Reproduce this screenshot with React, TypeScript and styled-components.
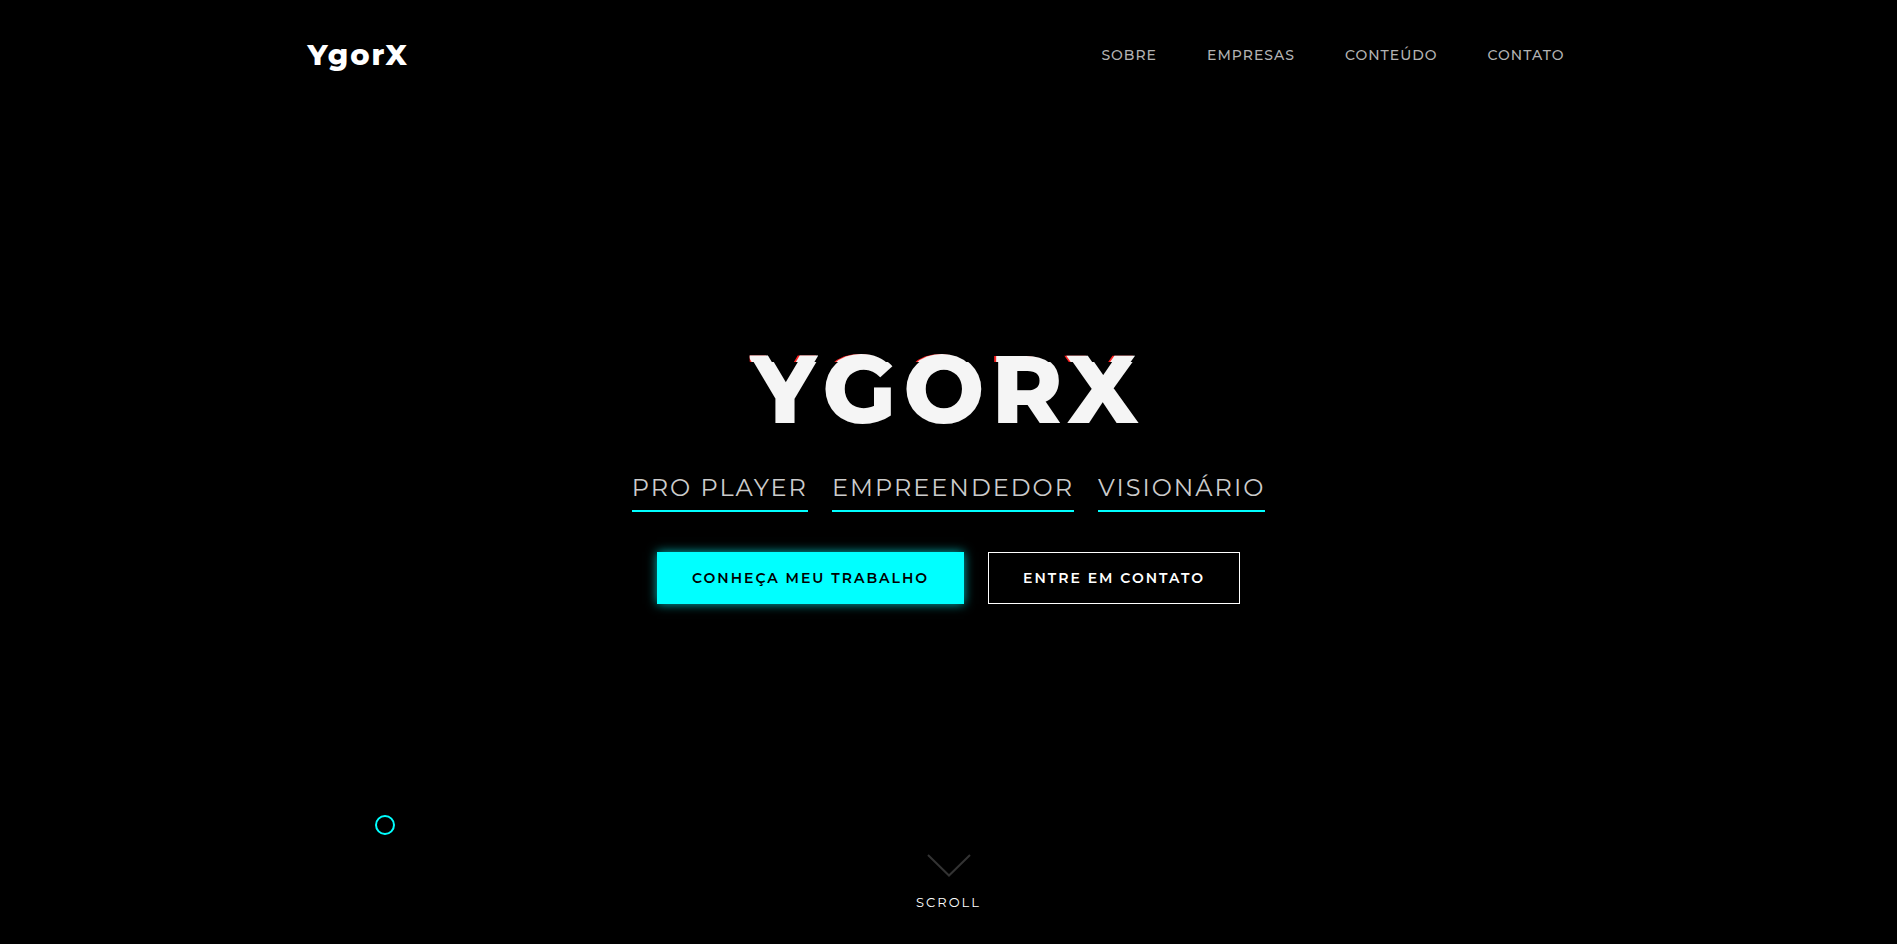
import React from "react";
import styled, { createGlobalStyle } from "styled-components";

const GlobalStyle = createGlobalStyle`
  *, *::before, *::after { box-sizing: border-box; }
  body {
    margin: 0;
    background: #000;
    color: #f5f5f5;
    font-family: Montserrat, Inter, sans-serif;
  }
`;

const Page = styled.div`
  min-height: 100vh;
  display: grid;
  grid-template-rows: 1fr auto 1fr;
`;

const Header = styled.header`
  align-self: start;
  width: 100%;
  max-width: 1282px;
  margin: 0 auto;
  padding-top: 32px;
  display: flex;
  justify-content: space-between;
  align-items: center;
`;

const Logo = styled.a`
  color: #fff;
  font-size: 29px;
  line-height: 46px;
  font-weight: 800;
  letter-spacing: 2px;
  text-decoration: none;
`;

const Nav = styled.nav`
  display: flex;
`;

const NavLink = styled.a`
  padding: 0 25px;
  color: #b3b3b3;
  font-size: 14px;
  line-height: 24px;
  font-weight: 500;
  letter-spacing: 1px;
  text-transform: uppercase;
  text-decoration: none;
`;

const Hero = styled.main`
  display: flex;
  flex-direction: column;
  align-items: center;
`;

const Title = styled.h1`
  position: relative;
  margin: 0 0 30px;
  font-size: 96px;
  line-height: 98px;
  font-weight: 800;
  letter-spacing: 7px;
  text-transform: uppercase;

  &::before {
    content: attr(data-text);
    position: absolute;
    top: 0;
    left: -2px;
    width: 100%;
    background: #000;
    text-shadow: -2px 0 #ff2020;
    clip-path: inset(0 0 76px 0);
  }
`;

const Roles = styled.p`
  margin: 0 0 40px;
  display: flex;
  gap: 24px;
`;

const Role = styled.span`
  padding-bottom: 2px;
  border-bottom: 2px solid #0ff;
  color: #ccc;
  font-size: 24px;
  line-height: 40px;
  font-weight: 400;
  letter-spacing: 2px;
  text-transform: uppercase;
`;

const Actions = styled.div`
  display: flex;
  gap: 24px;
`;

const Button = styled.button<{ $primary?: boolean }>`
  height: 52px;
  padding: 0 34px;
  border: 1px solid ${(p) => (p.$primary ? "#0ff" : "#fff")};
  background: ${(p) => (p.$primary ? "#0ff" : "transparent")};
  color: ${(p) => (p.$primary ? "#000" : "#fff")};
  box-shadow: ${(p) => (p.$primary ? "0 0 10px rgba(0, 255, 255, 0.7)" : "none")};
  font-family: inherit;
  font-size: 14px;
  font-weight: 600;
  letter-spacing: 2px;
  text-transform: uppercase;
  cursor: pointer;
`;

const ScrollLink = styled.a`
  align-self: end;
  justify-self: center;
  display: flex;
  flex-direction: column;
  align-items: center;
  gap: 15px;
  padding-bottom: 32px;
  color: #fff;
  font-size: 13px;
  line-height: 20px;
  font-weight: 400;
  letter-spacing: 2px;
  text-transform: uppercase;
  text-decoration: none;
`;

const CursorRing = styled.div`
  position: fixed;
  left: 375px;
  top: 815px;
  width: 20px;
  height: 20px;
  border: 2px solid #0ff;
  border-radius: 50%;
  pointer-events: none;
`;

const links = [
  ["Sobre", "#sobre"],
  ["Empresas", "#empresas"],
  ["Conteúdo", "#conteudo"],
  ["Contato", "#contato"],
];

const roles = ["Pro Player", "Empreendedor", "Visionário"];

export default function App() {
  return (
    <>
      <GlobalStyle />
      <Page>
        <Header>
          <Logo href="#">YgorX</Logo>
          <Nav>
            {links.map(([label, href]) => (
              <NavLink key={href} href={href}>{label}</NavLink>
            ))}
          </Nav>
        </Header>
        <Hero>
          <Title data-text="YgorX">YgorX</Title>
          <Roles>
            {roles.map((role) => <Role key={role}>{role}</Role>)}
          </Roles>
          <Actions>
            <Button $primary>Conheça meu trabalho</Button>
            <Button>Entre em contato</Button>
          </Actions>
        </Hero>
        <ScrollLink href="#sobre">
          <svg width="44" height="23" viewBox="0 0 44 23" fill="none" aria-hidden="true">
            <path d="M1 1 L22 21.5 L43 1" stroke="#333" strokeWidth="2" />
          </svg>
          Scroll
        </ScrollLink>
      </Page>
      <CursorRing />
    </>
  );
}
